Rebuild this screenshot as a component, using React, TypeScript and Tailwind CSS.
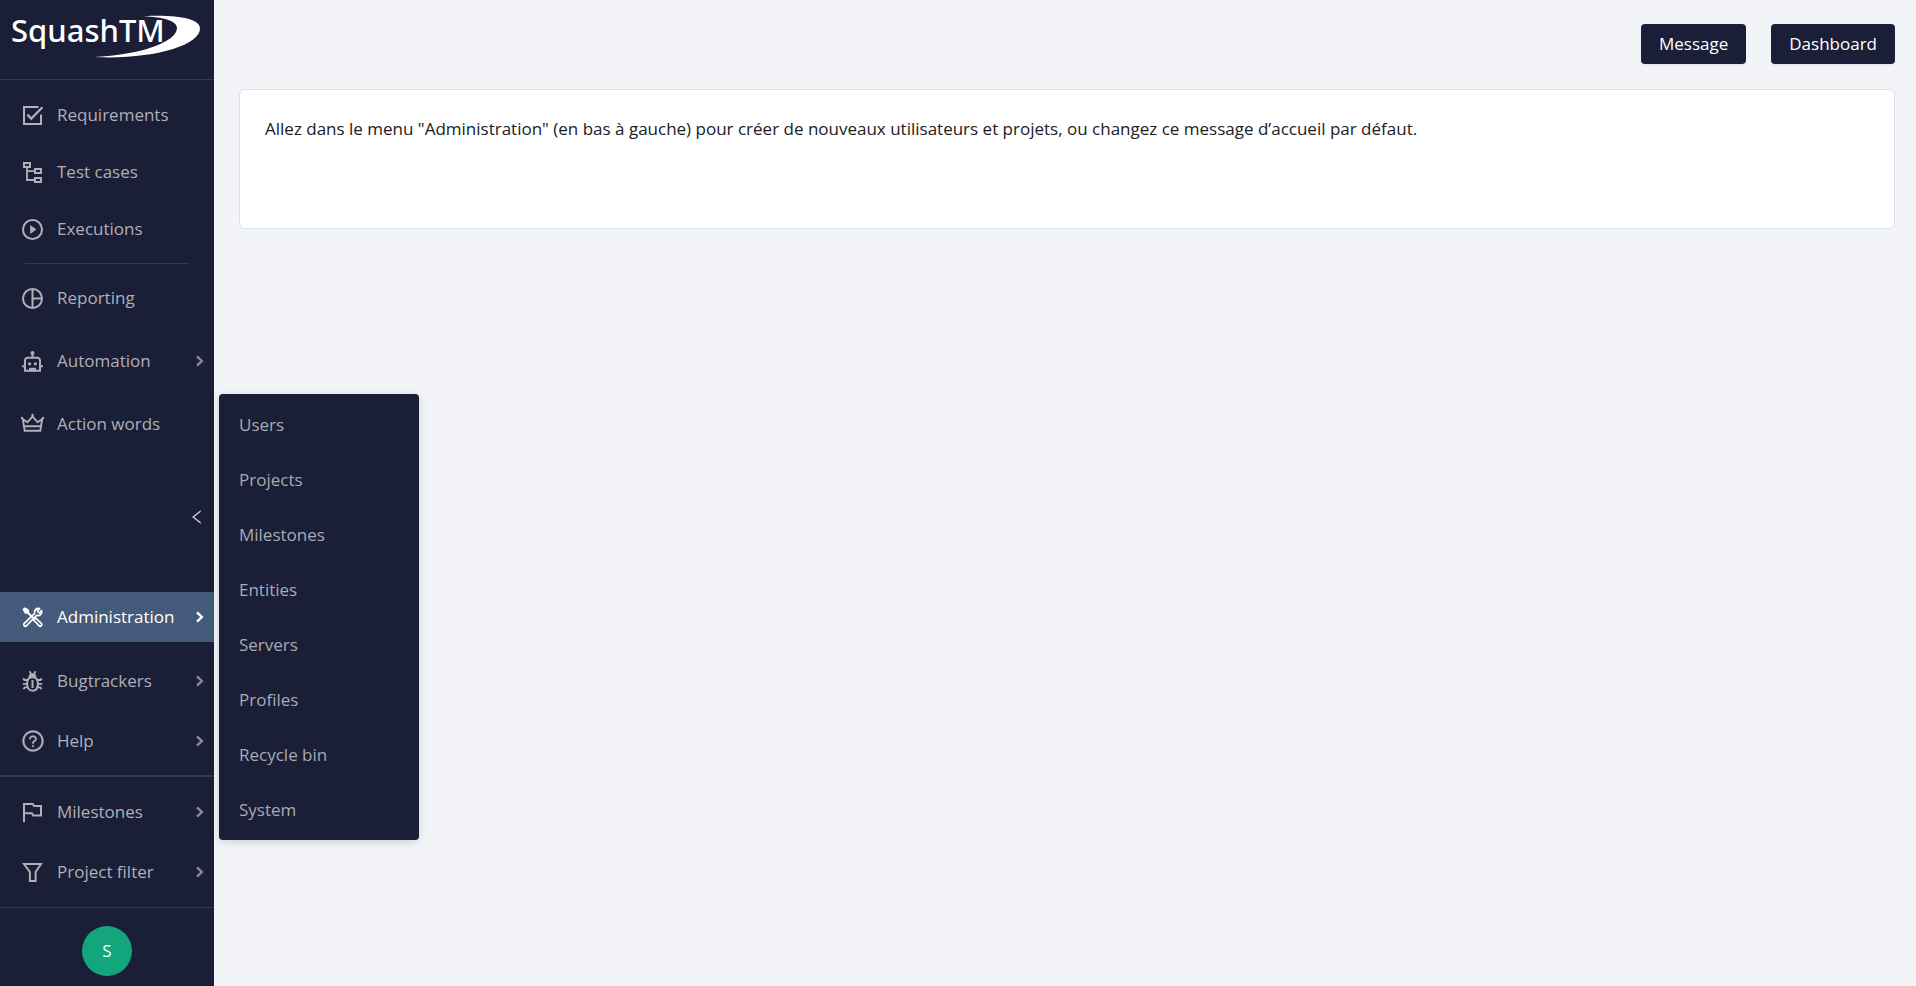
import React from 'react';
import { AiOutlineLeft, AiOutlineQuestionCircle } from 'react-icons/ai';
import clsx from 'clsx';

const Icon = ({ children }: { children: React.ReactNode }) => (
  <svg
    viewBox="0 0 21 21"
    className="size-[21px] shrink-0 overflow-visible"
    fill="none"
    stroke="currentColor"
    strokeWidth="2"
    aria-hidden="true"
  >
    {children}
  </svg>
);

const RequirementsIcon = () => (
  <Icon>
    <path d="M16.5 2H2v17h17V9.5" />
    <path d="M5.3 9.6l4 4L20.4 2.2" strokeWidth="2.2" />
  </Icon>
);

const TestCasesIcon = () => (
  <Icon>
    <path d="M2 1h6v4H2zM13 7h6v4h-6zM13 16h6v4h-6z" />
    <path d="M5 5.5V18h7.5M5 9.1h7.5" strokeWidth="1.8" />
  </Icon>
);

const ExecutionsIcon = () => (
  <Icon>
    <circle cx="10.5" cy="10.5" r="9.5" />
    <path d="M8.2 5.9v9.2l6.2-4.6z" fill="currentColor" stroke="none" />
  </Icon>
);

const ReportingIcon = () => (
  <Icon>
    <circle cx="10.5" cy="10.5" r="9.5" />
    <path d="M10.5 1v19M10.5 10.5H20" />
  </Icon>
);

const AutomationIcon = () => (
  <Icon>
    <path d="M3 19.8V9.5A2.8 2.8 0 0 1 5.8 6.7h9.4A2.8 2.8 0 0 1 18 9.5v10.3zM10.5 2v5M0 15.2h3M18 15.2h3" />
    <circle cx="10.5" cy="1.9" r="2" fill="currentColor" stroke="none" />
    <circle cx="7.6" cy="12.8" r="1.6" fill="currentColor" stroke="none" />
    <circle cx="13.4" cy="12.8" r="1.6" fill="currentColor" stroke="none" />
    <path d="M7 20.5v-3.7h7v3.7z" fill="currentColor" stroke="none" />
  </Icon>
);

const ActionWordsIcon = () => (
  <Icon>
    <path d="M.8 5l1.9 11.7h15.6L20.2 5l-4.6 3.3L10.5 2.4 5.4 8.3zM2.4 12.2h16.2" strokeWidth="1.9" />
    <circle cx="0" cy="4" r="1.2" fill="currentColor" stroke="none" />
    <circle cx="21" cy="4" r="1.2" fill="currentColor" stroke="none" />
    <circle cx="10.5" cy="1" r="1.2" fill="currentColor" stroke="none" />
  </Icon>
);

const AdministrationIcon = () => (
  <Icon>
    <path d="M1.2 2.4L2.8 1l3.4 2 .4 2-1.4 1.4-2-.4z" fill="currentColor" strokeWidth="1.2" />
    <path d="M5.5 5.3l5.7 5.7" strokeWidth="2" />
    <path d="M11.5 13l2-2 5.8 5.4a1.6 1.6 0 0 1-2.3 2.3z" strokeWidth="1.7" />
    <path
      d="M17.6 1.6a3.8 3.8 0 0 0-4.9 4.8L2.2 16.4a1.6 1.6 0 0 0 2.3 2.3L14.6 8.4a3.8 3.8 0 0 0 5-4.7L17.3 6l-2-2z"
      strokeWidth="1.7"
      strokeLinejoin="round"
    />
  </Icon>
);

const BugtrackersIcon = () => (
  <Icon>
    <path d="M10.5 6.2c4 0 5.4 2.2 5.4 6.2 0 4.6-2 7.3-5.4 7.3s-5.4-2.7-5.4-7.3c0-4 1.4-6.2 5.4-6.2z" />
    <path d="M6.6 6.4c0-2.8 1.3-4.2 3.9-4.2s3.9 1.4 3.9 4.2z" fill="currentColor" stroke="none" />
    <path d="M7.3.3l1.9 2.6M13.7.3l-1.9 2.6" strokeWidth="1.8" />
    <path d="M10.5 9v8" />
    <path
      d="M5.5 9H2.4L1.2 7.4M5.2 12.9H.8M5.5 16.4H2.8l-1.4 1.8M15.5 9h3.1l1.2-1.6M15.8 12.9h4.4M15.5 16.4h2.7l1.4 1.8"
      strokeWidth="1.9"
    />
  </Icon>
);

const HelpIcon = () => (
  <span className="flex size-[21px] shrink-0 items-center justify-center">
    <AiOutlineQuestionCircle className="size-6 shrink-0" strokeWidth="16" stroke="currentColor" />
  </span>
);

const FlagIcon = () => (
  <Icon>
    <path d="M2 20V2h8.8L12 4h7v9.4h-7.8L10 11.2H2" />
  </Icon>
);

const FilterIcon = () => (
  <Icon>
    <path d="M2 2h17l-5.4 8v9H7.9v-9z" />
  </Icon>
);

const Logo = () => (
  <a href="#home" className="relative block h-[79px] text-white" aria-label="SquashTM">
    <span className="block pl-[11px] font-[Noto_Sans] text-[31px] leading-[61px] font-medium">SquashTM</span>
    <svg viewBox="0 0 214 79" className="absolute inset-0 h-[79px] w-[214px]" fill="currentColor" aria-hidden="true">
      <path d="M144 16.3C174 14.5 200 18 200 28.5 200 46 150 60 94 57c46-2 83-15 83-29 0-7-14-11-33-11.7z" />
    </svg>
  </a>
);

type NavItemProps = {
  icon: React.ReactNode;
  label: string;
  expandable?: boolean;
  active?: boolean;
};

const NavItem = ({ icon, label, expandable, active }: NavItemProps) => (
  <a
    href="#"
    className={clsx(
      'flex h-[50px] items-center gap-[14px] pr-[9px] pl-[22px]',
      active ? 'bg-[#445a7a] text-white' : 'text-[#afb0b8]'
    )}
  >
    {icon}
    <span className="flex-1 whitespace-nowrap">{label}</span>
    {expandable && (
      <svg
        viewBox="0 0 10 14"
        className={clsx('h-[14px] w-[10px]', !active && 'opacity-75')}
        fill="none"
        stroke="currentColor"
        strokeWidth="2.4"
        aria-hidden="true"
      >
        <path d="M2 2.4L6.8 7 2 11.6" />
      </svg>
    )}
  </a>
);

const adminEntries = ['Users', 'Projects', 'Milestones', 'Entities', 'Servers', 'Profiles', 'Recycle bin', 'System'];

const AdminMenu = () => (
  <ul className="absolute top-1/2 left-full z-10 ml-[5px] w-[200px] -translate-y-1/2 rounded bg-[#1a1e36] py-[3px] text-[#a9aab2] shadow-[0_2px_8px_rgba(0,0,0,0.15)]">
    {adminEntries.map((entry) => (
      <li key={entry}>
        <a href="#" className="flex h-[55px] items-center px-5">
          {entry}
        </a>
      </li>
    ))}
  </ul>
);

const Sidebar = () => (
  <nav className="flex w-[214px] shrink-0 flex-col bg-[#1a1e36]">
    <div className="border-b border-[#34365c]">
      <Logo />
    </div>

    <div className="flex flex-col gap-[7px] pt-[10px]">
      <NavItem icon={<RequirementsIcon />} label="Requirements" />
      <NavItem icon={<TestCasesIcon />} label="Test cases" />
      <NavItem icon={<ExecutionsIcon />} label="Executions" />
    </div>
    <hr className="mx-[25px] my-[9px] border-[#34365c]" />
    <div className="flex flex-col gap-[13px]">
      <NavItem icon={<ReportingIcon />} label="Reporting" />
      <NavItem icon={<AutomationIcon />} label="Automation" expandable />
      <NavItem icon={<ActionWordsIcon />} label="Action words" />
    </div>

    <div className="flex flex-1 items-center justify-end pr-2 pb-2">
      <button type="button" aria-label="Collapse" className="text-[#c4c5cb]">
        <AiOutlineLeft className="size-[18px]" />
      </button>
    </div>

    {/* Administration and its opened submenu */}
    <div className="relative mb-[14px]">
      <NavItem icon={<AdministrationIcon />} label="Administration" expandable active />
      <AdminMenu />
    </div>
    <div className="flex flex-col gap-[10px] pb-[9px]">
      <NavItem icon={<BugtrackersIcon />} label="Bugtrackers" expandable />
      <NavItem icon={<HelpIcon />} label="Help" expandable />
    </div>
    <div className="flex flex-col gap-[10px] border-t-2 border-[#34365c] py-[10px]">
      <NavItem icon={<FlagIcon />} label="Milestones" expandable />
      <NavItem icon={<FilterIcon />} label="Project filter" expandable />
    </div>
    <div className="flex justify-center border-t border-[#34365c] pt-[18px] pb-[10px]">
      <button type="button" className="size-[50px] rounded-full bg-[#13a57c] text-white">
        S
      </button>
    </div>
  </nav>
);

const HeaderButton = ({ children }: { children: React.ReactNode }) => (
  <button type="button" className="h-10 rounded bg-[#1a1e36] px-[18px] text-white shadow-[0_2px_0_rgba(0,0,0,0.04)]">
    {children}
  </button>
);

const App = () => {
  return (
    <div className="flex min-h-screen bg-[#f2f4f8] font-[Open_Sans,Noto_Sans,sans-serif] text-[17px] leading-[26px]">
      <Sidebar />
      <main className="flex-1 pt-6 pr-[21px] pl-[25px]">
        <div className="flex justify-end gap-[25px]">
          <HeaderButton>Message</HeaderButton>
          <HeaderButton>Dashboard</HeaderButton>
        </div>
        <section className="mt-[25px] min-h-[140px] rounded-md border border-[#d9e4ea] bg-white px-[25px] py-[26px] text-[#202124]">
          <p>
            Allez dans le menu "Administration" (en bas à gauche) pour créer de nouveaux utilisateurs et projets, ou
            changez ce message d’accueil par défaut.
          </p>
        </section>
      </main>
    </div>
  );
};

export default App;
